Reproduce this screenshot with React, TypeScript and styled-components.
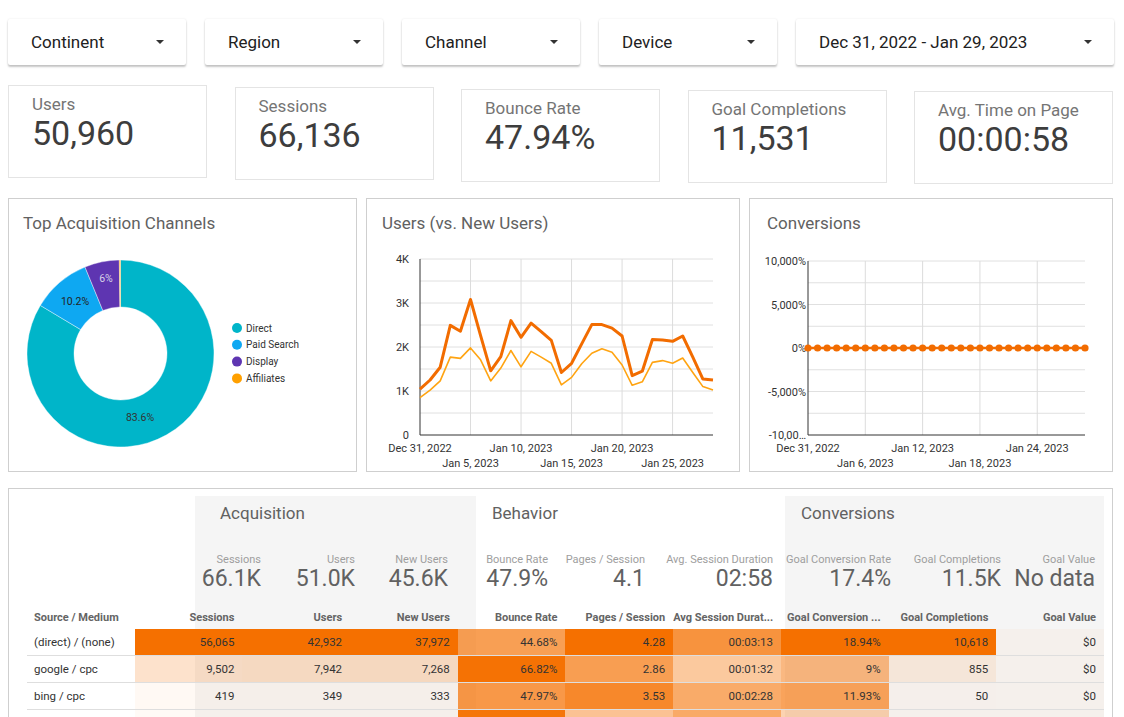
import React from 'react';
import styled, { createGlobalStyle } from 'styled-components';

const Global = createGlobalStyle`
  html, body { margin: 0; padding: 0; background: #ffffff; }
  body { font-family: Roboto, "Noto Sans", Arial, sans-serif; color: #212121; }
  * { box-sizing: border-box; }
`;

const Page = styled.div`
  width: 1114px;
  padding: 19px 0 0 8px;
  display: flex;
  flex-direction: column;
`;

/* ---------- Filter bar ---------- */
const FilterBar = styled.div`
  display: grid;
  grid-template-columns: repeat(4, 178px) 1fr;
  column-gap: 19px;
  width: 1106px;
`;

const Dropdown = styled.div`
  height: 46px;
  background: #fff;
  box-shadow: 0 2px 2px rgba(0, 0, 0, 0.22), 0 0 2px rgba(0, 0, 0, 0.1);
  border-radius: 2px;
  display: flex;
  align-items: center;
  justify-content: space-between;
  padding: 0 22px 0 23px;
  font-size: 17px;
  color: #212121;
`;

const Caret = styled.span`
  width: 0;
  height: 0;
  border-left: 4px solid transparent;
  border-right: 4px solid transparent;
  border-top: 4px solid #333;
`;

/* ---------- KPI cards ---------- */
const KpiRow = styled.div`
  display: grid;
  grid-template-columns: repeat(5, 199px);
  column-gap: 27.5px;
  align-items: start;
  margin-top: 20px;
  height: 99px;
`;

const KpiCard = styled.div<{ $offset: number }>`
  margin-top: ${(p) => p.$offset}px;
  height: 93px;
  border: 1px solid #e4e4e4;
  padding: 9px 0 0 23px;
  display: flex;
  flex-direction: column;
`;

const KpiLabel = styled.div`
  font-size: 17px;
  line-height: 19px;
  color: #757575;
`;

const KpiValue = styled.div`
  font-size: 34px;
  line-height: 39px;
  color: #3d3d3d;
`;

/* ---------- Chart panels ---------- */
const ChartRow = styled.div`
  display: grid;
  grid-template-columns: 349px 374px 364px;
  column-gap: 9px;
  margin-top: 14px;
`;

const Panel = styled.div`
  height: 274px;
  border: 1px solid #cfcfcf;
  display: flex;
  flex-direction: column;
`;

const PanelTitle = styled.div<{ $pad: number }>`
  height: 41px;
  padding: 15px 0 0 ${(p) => p.$pad}px;
  font-size: 17px;
  line-height: 19px;
  color: #616161;
`;

const ChartSvg = styled.svg`
  display: block;
  text {
    font-family: Roboto, "Noto Sans", Arial, sans-serif;
  }
`;

/* ---------- Table ---------- */
const TablePanel = styled.div`
  margin-top: 16px;
  width: 1105px;
  border: 1px solid #cfcfcf;
  border-bottom: none;
  padding: 7px 8px 20px 18px;
  background-image: linear-gradient(
    to right,
    transparent 186px,
    #f5f5f5 186px,
    #f5f5f5 467px,
    transparent 467px,
    transparent 776px,
    #f5f5f5 776px,
    #f5f5f5 1095px,
    transparent 1095px
  );
  background-repeat: no-repeat;
  background-position: 0 7px;
  background-size: 100% 100%;
`;

const GroupBar = styled.div`
  display: flex;
  height: 111px;
  padding-left: 168px;
`;

const Group = styled.div<{ $w: number }>`
  width: ${(p) => p.$w}px;
  padding-top: 7px;
  display: flex;
  flex-direction: column;
`;

const GroupTitle = styled.div<{ $pad: number }>`
  padding-left: ${(p) => p.$pad}px;
  font-size: 17px;
  line-height: 20px;
  color: #616161;
`;

const ScoreRow = styled.div<{ $cols: string }>`
  margin-top: 30px;
  display: grid;
  grid-template-columns: ${(p) => p.$cols};
`;

const Score = styled.div`
  display: flex;
  flex-direction: column;
  align-items: flex-end;
  white-space: nowrap;
`;

const ScoreLabel = styled.div`
  font-size: 11px;
  line-height: 13px;
  color: #9e9e9e;
`;

const ScoreValue = styled.div`
  font-size: 23px;
  line-height: 26px;
  color: #616161;
`;

const HeaderRow = styled.div`
  display: grid;
  grid-template-columns: repeat(10, 1fr);
  height: 22px;
`;

const HeadCell = styled.div<{ $left?: boolean }>`
  font-size: 11px;
  font-weight: 700;
  line-height: 22px;
  color: #646464;
  white-space: nowrap;
  overflow: hidden;
  text-align: ${(p) => (p.$left ? 'left' : 'right')};
  padding: ${(p) => (p.$left ? '0 0 0 7px' : '0 8px 0 0')};
`;

const DataRow = styled.div`
  display: grid;
  grid-template-columns: repeat(10, 1fr);
  height: 27px;
  border-bottom: 1px solid #dedede;
`;

const SourceCell = styled.div`
  font-size: 11.5px;
  line-height: 26px;
  color: #333;
  padding-left: 7px;
  white-space: nowrap;
`;

const HeatCell = styled.div<{ $alpha: number }>`
  font-size: 11.5px;
  line-height: 26px;
  color: #333;
  text-align: right;
  padding-right: 8px;
  background: rgba(245, 112, 0, ${(p) => p.$alpha});
`;

/* ---------- Data ---------- */
const filters = ['Continent', 'Region', 'Channel', 'Device', 'Dec 31, 2022 - Jan 29, 2023'];

const kpis = [
  { label: 'Users', value: '50,960', offset: 0 },
  { label: 'Sessions', value: '66,136', offset: 2 },
  { label: 'Bounce Rate', value: '47.94%', offset: 4 },
  { label: 'Goal Completions', value: '11,531', offset: 5 },
  { label: 'Avg. Time on Page', value: '00:00:58', offset: 6 },
];

const donut = [
  { name: 'Direct', share: 0.836, color: '#00b5c9' },
  { name: 'Paid Search', share: 0.102, color: '#0ea8f2' },
  { name: 'Display', share: 0.06, color: '#5e35b1' },
  { name: 'Affiliates', share: 0.002, color: '#ffa000' },
];

const users = [1.04, 1.25, 1.54, 2.49, 2.36, 3.08, 2.26, 1.46, 1.78, 2.6, 2.22, 2.54, 2.35, 2.15, 1.42, 1.63, 2.07, 2.51, 2.51, 2.43, 2.25, 1.35, 1.45, 2.17, 2.16, 2.13, 2.25, 1.77, 1.27, 1.25];
const newUsers = [0.85, 1.02, 1.23, 1.77, 1.74, 1.98, 1.71, 1.23, 1.52, 1.92, 1.55, 1.9, 1.77, 1.63, 1.14, 1.31, 1.62, 1.86, 1.96, 1.88, 1.59, 1.13, 1.21, 1.65, 1.69, 1.63, 1.75, 1.42, 1.1, 1.02];

const colMax = [56065, 42932, 37972, 68, 4.28, 258, 18.94, 10618, 0];

const rows = [
  { src: '(direct) / (none)', v: [56065, 42932, 37972, 44.68, 4.28, 193, 18.94, 10618, 0], d: ['56,065', '42,932', '37,972', '44.68%', '4.28', '00:03:13', '18.94%', '10,618', '$0'] },
  { src: 'google / cpc', v: [9502, 7942, 7268, 66.82, 2.86, 92, 9, 855, 0], d: ['9,502', '7,942', '7,268', '66.82%', '2.86', '00:01:32', '9%', '855', '$0'] },
  { src: 'bing / cpc', v: [419, 349, 333, 47.97, 3.53, 148, 11.93, 50, 0], d: ['419', '349', '333', '47.97%', '3.53', '00:02:28', '11.93%', '50', '$0'] },
  { src: '', v: [118, 96, 90, 65.1, 1.72, 150, 5.3, 6, 0], d: ['', '', '', '', '', '', '', '', ''] },
];

const heat = (v: number, max: number) => 0.035 + 0.965 * (max > 0 ? v / max : 0);

/* ---------- Charts ---------- */
function arcPath(cx: number, cy: number, R: number, r: number, f0: number, f1: number) {
  const pt = (rad: number, f: number) => {
    const a = f * 2 * Math.PI - Math.PI / 2;
    return [cx + rad * Math.cos(a), cy + rad * Math.sin(a)];
  };
  const large = f1 - f0 > 0.5 ? 1 : 0;
  const [x0, y0] = pt(R, f0);
  const [x1, y1] = pt(R, f1);
  const [x2, y2] = pt(r, f1);
  const [x3, y3] = pt(r, f0);
  return `M${x0} ${y0} A${R} ${R} 0 ${large} 1 ${x1} ${y1} L${x2} ${y2} A${r} ${r} 0 ${large} 0 ${x3} ${y3} Z`;
}

function DonutChart() {
  let acc = 0;
  const slices = donut.map((s) => {
    const p = arcPath(120.5, 353.5, 93.5, 46.5, acc, acc + s.share);
    acc += s.share;
    return <path key={s.name} d={p} fill={s.color} stroke="#fff" strokeWidth={0.4} />;
  });
  return (
    <ChartSvg width={347} height={231} viewBox="9 240 347 231">
      {slices}
      <text x={140} y={421} fontSize={10.5} fill="#333" textAnchor="middle">83.6%</text>
      <text x={75} y={305} fontSize={10.5} fill="#222" textAnchor="middle">10.2%</text>
      <text x={106} y={282} fontSize={10.5} fill="#d6d0e8" textAnchor="middle">6%</text>
      {donut.map((s, i) => (
        <g key={s.name}>
          <circle cx={237} cy={328 + i * 16.8} r={5} fill={s.color} />
          <text x={246} y={331.5 + i * 16.8} fontSize={10} fill="#333">{s.name}</text>
        </g>
      ))}
    </ChartSvg>
  );
}

function UsersChart() {
  const L = 420, R = 713, T = 259, B = 435;
  const x = (i: number) => L + (i * (R - L)) / 29;
  const y = (v: number) => B - v * 44;
  const line = (arr: number[]) => arr.map((v, i) => `${i ? 'L' : 'M'}${x(i).toFixed(1)} ${y(v).toFixed(1)}`).join(' ');
  const hLines = [0, 1, 2, 3, 4, 5, 6, 7].map((k) => T + k * 22);
  const vDays = [5, 10, 15, 20, 25];
  const xLabels = [
    { d: 0, t: 'Dec 31, 2022', row: 0 },
    { d: 5, t: 'Jan 5, 2023', row: 1 },
    { d: 10, t: 'Jan 10, 2023', row: 0 },
    { d: 15, t: 'Jan 15, 2023', row: 1 },
    { d: 20, t: 'Jan 20, 2023', row: 0 },
    { d: 25, t: 'Jan 25, 2023', row: 1 },
  ];
  return (
    <ChartSvg width={372} height={231} viewBox="367 240 372 231">
      {hLines.map((yy) => (
        <line key={yy} x1={L} x2={R} y1={yy} y2={yy} stroke="#e0e0e0" strokeWidth={1} />
      ))}
      {vDays.map((d) => (
        <line key={d} x1={x(d)} x2={x(d)} y1={T} y2={B} stroke="#dcdcdc" strokeWidth={1} />
      ))}
      <line x1={L} x2={L} y1={T} y2={B} stroke="#333" strokeWidth={1} />
      <line x1={L} x2={R} y1={B} y2={B} stroke="#333" strokeWidth={1} />
      {['0', '1K', '2K', '3K', '4K'].map((t, i) => (
        <text key={t} x={409} y={B - i * 44 + 4} fontSize={11} fill="#333" textAnchor="end">{t}</text>
      ))}
      {xLabels.map((l) => (
        <text key={l.t} x={x(l.d)} y={l.row ? 467 : 452} fontSize={11} fill="#333" textAnchor="middle">{l.t}</text>
      ))}
      <path d={line(newUsers)} fill="none" stroke="#ffa412" strokeWidth={1.6} strokeLinejoin="round" />
      <path d={line(users)} fill="none" stroke="#f26c00" strokeWidth={3} strokeLinejoin="round" />
    </ChartSvg>
  );
}

function ConversionsChart() {
  const L = 808, R = 1085, T = 261, B = 435;
  const step = (R - L) / 29;
  const x = (i: number) => L + i * step;
  const hLines = [0, 1, 2, 3, 4, 5, 6, 7].map((k) => T + k * 21.75);
  const vDays = [6, 12, 18, 24];
  const yLabels = ['10,000%', '5,000%', '0%', '-5,000%', '-10,00…'];
  const xLabels = [
    { d: 0, t: 'Dec 31, 2022', row: 0 },
    { d: 6, t: 'Jan 6, 2023', row: 1 },
    { d: 12, t: 'Jan 12, 2023', row: 0 },
    { d: 18, t: 'Jan 18, 2023', row: 1 },
    { d: 24, t: 'Jan 24, 2023', row: 0 },
  ];
  const pts = Array.from({ length: 30 }, (_, i) => i);
  return (
    <ChartSvg width={362} height={231} viewBox="750 240 362 231">
      {hLines.map((yy) => (
        <line key={yy} x1={L} x2={R} y1={yy} y2={yy} stroke="#e0e0e0" strokeWidth={1} />
      ))}
      {vDays.map((d) => (
        <line key={d} x1={x(d)} x2={x(d)} y1={T} y2={B} stroke="#dcdcdc" strokeWidth={1} />
      ))}
      <line x1={L} x2={L} y1={T} y2={B} stroke="#333" strokeWidth={1} />
      <line x1={L} x2={R} y1={B} y2={B} stroke="#333" strokeWidth={1} />
      {yLabels.map((t, i) => (
        <text key={t} x={806} y={T + i * 43.5 + 4} fontSize={11} fill="#333" textAnchor="end">{t}</text>
      ))}
      {xLabels.map((l) => (
        <text key={l.t} x={x(l.d)} y={l.row ? 467 : 452} fontSize={11} fill="#333" textAnchor="middle">{l.t}</text>
      ))}
      <line x1={L} x2={R} y1={348} y2={348} stroke="#f26c00" strokeWidth={2.5} />
      {pts.map((i) => (
        <circle key={i} cx={x(i)} cy={348} r={3.6} fill="#f26c00" />
      ))}
    </ChartSvg>
  );
}

const groups = [
  {
    title: 'Acquisition', w: 281, pad: 25, cols: '66px 94px 93px',
    scores: [['Sessions', '66.1K'], ['Users', '51.0K'], ['New Users', '45.6K']],
  },
  {
    title: 'Behavior', w: 309, pad: 16, cols: '72px 97px 128px',
    scores: [['Bounce Rate', '47.9%'], ['Pages / Session', '4.1'], ['Avg. Session Duration', '02:58']],
  },
  {
    title: 'Conversions', w: 319, pad: 16, cols: '106px 110px 94px',
    scores: [['Goal Conversion Rate', '17.4%'], ['Goal Completions', '11.5K'], ['Goal Value', 'No data']],
  },
];

const headers = ['Sessions', 'Users', 'New Users', 'Bounce Rate', 'Pages / Session', 'Avg Session Durat...', 'Goal Conversion ...', 'Goal Completions', 'Goal Value'];

export default function App() {
  return (
    <>
      <Global />
      <Page>
        <FilterBar>
          {filters.map((f) => (
            <Dropdown key={f}>
              <span>{f}</span>
              <Caret />
            </Dropdown>
          ))}
        </FilterBar>

        <KpiRow>
          {kpis.map((k) => (
            <KpiCard key={k.label} $offset={k.offset}>
              <KpiLabel>{k.label}</KpiLabel>
              <KpiValue>{k.value}</KpiValue>
            </KpiCard>
          ))}
        </KpiRow>

        <ChartRow>
          <Panel>
            <PanelTitle $pad={14}>Top Acquisition Channels</PanelTitle>
            <DonutChart />
          </Panel>
          <Panel>
            <PanelTitle $pad={15}>Users (vs. New Users)</PanelTitle>
            <UsersChart />
          </Panel>
          <Panel>
            <PanelTitle $pad={17}>Conversions</PanelTitle>
            <ConversionsChart />
          </Panel>
        </ChartRow>

        <TablePanel>
          <GroupBar>
            {groups.map((g) => (
              <Group key={g.title} $w={g.w}>
                <GroupTitle $pad={g.pad}>{g.title}</GroupTitle>
                <ScoreRow $cols={g.cols}>
                  {g.scores.map(([l, v]) => (
                    <Score key={l}>
                      <ScoreLabel>{l}</ScoreLabel>
                      <ScoreValue>{v}</ScoreValue>
                    </Score>
                  ))}
                </ScoreRow>
              </Group>
            ))}
          </GroupBar>
          <HeaderRow>
            <HeadCell $left>Source / Medium</HeadCell>
            {headers.map((h) => (
              <HeadCell key={h}>{h}</HeadCell>
            ))}
          </HeaderRow>
          {rows.map((r, ri) => (
            <DataRow key={ri}>
              <SourceCell>{r.src}</SourceCell>
              {r.v.map((v, i) => (
                <HeatCell key={i} $alpha={heat(v, colMax[i])}>{r.d[i]}</HeatCell>
              ))}
            </DataRow>
          ))}
        </TablePanel>
      </Page>
    </>
  );
}
